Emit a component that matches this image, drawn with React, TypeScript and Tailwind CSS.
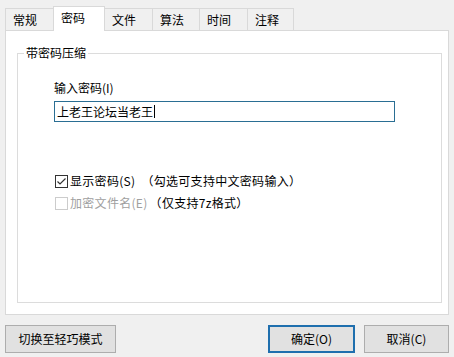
import React from "react";

const tabs = ["常规", "密码", "文件", "算法", "时间", "注释"];
const tabW = ["w-[49px]", "w-[52px]", "w-[49px]", "w-[48px]", "w-[49px]", "w-[47px]"];

export default function App() {
  return (
    <div className="w-[454px] h-[357px] bg-[#f0f0f0] flex flex-col font-['Noto_Sans_CJK_SC','Noto_Sans',sans-serif] text-[12px] leading-[16px] text-black overflow-hidden">
      {/* Tabs */}
      <div className="flex items-end h-[31px] pl-[5px]">
        {tabs.map((t, i) => {
          const sel = i === 1;
          return (
            <div
              key={t}
              className={
                tabW[i] +
                " flex items-center pl-[7px] border border-b-0 border-[#d9d9d9] " +
                (i > 0 ? "-ml-px " : "") +
                (sel ? "relative z-10 h-[25px] bg-white pb-[2px]" : "h-[23px] bg-[#f0f0f0]")
              }
            >
              {t}
            </div>
          );
        })}
      </div>

      {/* Panel */}
      <div className="-mt-px mx-[5px] h-[285px] border border-[#d9d9d9] bg-white pt-[22px] pl-[11px]">
        <div className="relative w-[425px] h-[250px] border border-[#dcdcdc] pt-[26px] pl-[36px]">
          <span className="absolute -top-[9px] left-[6px] bg-white px-[2px]">带密码压缩</span>
          <div>输入密码(I)</div>
          <div className="mt-[5px] w-[341px] h-[21px] border border-[#2a6e93] flex items-center pl-[2px]">
            <span>上老王论坛当老王</span>
            <span className="w-px h-[13px] bg-black ml-[1px]" />
          </div>

          <div className="mt-[51px] ml-[1px] flex items-center h-[16px]">
            <div className="w-[13px] h-[13px] border border-[#333333] bg-white flex items-center justify-center">
              <svg width="11" height="11" viewBox="0 0 11 11">
                <polyline points="1.5,5.5 4,8 9.5,2.5" fill="none" stroke="#333333" strokeWidth="1.2" />
              </svg>
            </div>
            <span className="ml-[2px] tracking-[0.3px]">显示密码(S)</span>
            <span className="ml-[6px] tracking-[0.3px]">（勾选可支持中文密码输入）</span>
          </div>

          <div className="mt-[6px] ml-[1px] flex items-center h-[16px]">
            <div className="w-[13px] h-[13px] border border-[#cccccc] bg-white" />
            <span className="ml-[2px] text-[#a0a0a0] tracking-[0.3px]">加密文件名(E)</span>
            <span className="ml-[2px] tracking-[0.3px]">（仅支持7z格式）</span>
          </div>
        </div>
      </div>

      {/* Buttons */}
      <div className="flex mt-[10px] px-[5px]">
        <button className="w-[111px] h-[28px] bg-[#e1e1e1] border border-[#adadad] flex items-center justify-center">
          切换至轻巧模式
        </button>
        <button className="ml-auto w-[87px] h-[28px] bg-[#e1e1e1] border-2 border-[#1f6fae] flex items-center justify-center">
          确定(O)
        </button>
        <button className="ml-[9px] w-[85px] h-[28px] bg-[#e1e1e1] border border-[#adadad] flex items-center justify-center">
          取消(C)
        </button>
      </div>
    </div>
  );
}
